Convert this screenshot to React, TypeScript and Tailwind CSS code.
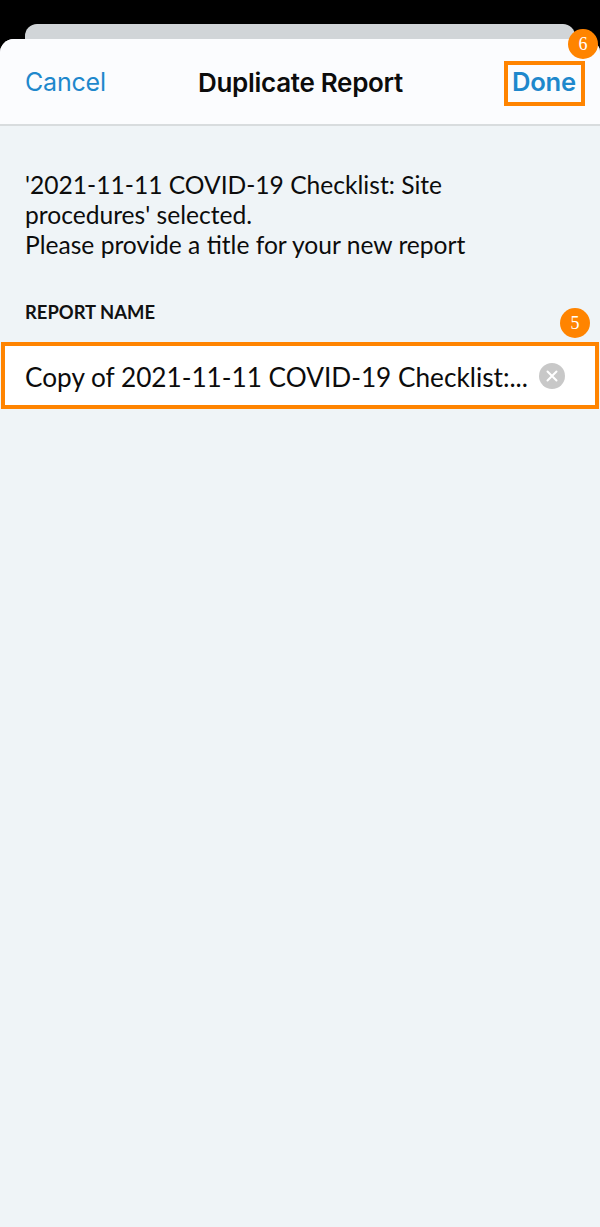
export default function App() {
  return (
    <div className="w-[600px] h-[1227px] bg-black overflow-hidden flex flex-col pt-[24px] font-['Lato',sans-serif]">
      {/* card stacked behind the sheet */}
      <div className="h-[15px] mx-[25px] shrink-0 bg-[#d1d5d8] rounded-t-[12px]" />

      <div className="flex-1 flex flex-col bg-[#eff4f7] rounded-t-[14px] overflow-hidden">
        <header className="relative h-[87px] shrink-0 grid grid-cols-[1fr_auto_1fr] items-center pl-[25px] pr-[24px] pt-[2px] bg-[#fbfcfe] border-b-2 border-[#d8dcde]">
          <button className="justify-self-start text-[25px] text-[#1e88cc] font-['Inter',sans-serif] tracking-[-0.2px]">Cancel</button>
          <h1 className="text-[26px] font-semibold text-[#0c0c0c] font-['Inter',sans-serif] tracking-[-0.3px]">Duplicate Report</h1>
          <button className="justify-self-end text-[25.6px] font-semibold text-[#1e88cc] font-['Inter',sans-serif] tracking-[-0.2px]">Done</button>
          <div className="absolute left-[504px] top-[22px] w-[81px] h-[45px] border-[4px] border-[#ff8400]" />
        </header>

        <p className="mt-[44px] px-[25px] text-[24.6px] leading-[30px] text-[#0c0c0c]">
          '2021-11-11 COVID-19 Checklist: Site
          <br />
          procedures' selected.
          <br />
          Please provide a title for your new report
        </p>

        <div className="mt-[40px] px-[25px] text-[18.4px] leading-[24px] font-bold text-[#111]">REPORT NAME</div>

        <div className="relative mt-[18px] h-[67px] bg-white flex items-center pl-[25px] pr-[30px] pt-[5px] border-[4px] border-[#ff8400] ml-[1px] mr-[1px]">
          <span className="flex-1 ml-[-5px] text-[26.2px] text-[#0c0c0c] whitespace-nowrap">Copy of 2021-11-11 COVID-19 Checklist:...</span>
          <span className="w-[26px] h-[26px] mt-[-5px] rounded-full bg-[#c8c8c8] flex items-center justify-center shrink-0">
            <svg width="12" height="12" viewBox="0 0 12 12" fill="none" stroke="white" strokeWidth="2" strokeLinecap="round">
              <path d="M1.5 1.5l9 9M10.5 1.5l-9 9" />
            </svg>
          </span>
        </div>
      </div>

      <div className="absolute left-[568px] top-[29px] w-[30px] h-[30px] rounded-full bg-[#ff8400] flex items-center justify-center text-white text-[18px] font-['Liberation_Serif',serif]">6</div>
      <div className="absolute left-[560px] top-[308px] w-[30px] h-[30px] rounded-full bg-[#ff8400] flex items-center justify-center text-white text-[18px] font-['Liberation_Serif',serif]">5</div>
    </div>
  );
}
